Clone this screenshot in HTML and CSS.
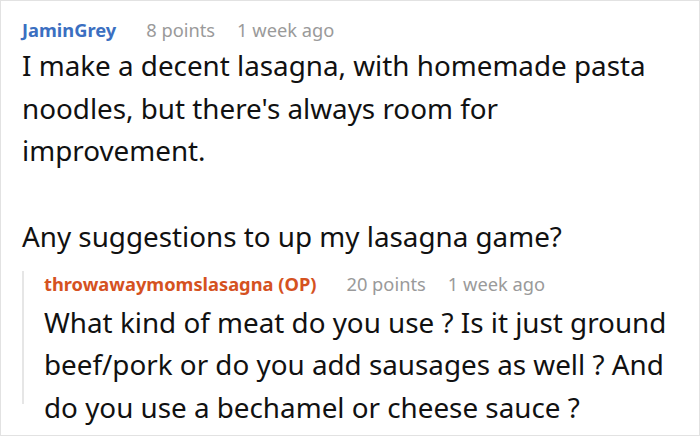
FILE: index.html
```html
<!DOCTYPE html>
<html>
<head>
<meta charset="utf-8">
<link rel="stylesheet" href="styles.css">
</head>
<body>
<div class="thread">
  <div class="comment">
    <div class="meta">
      <span class="author">JaminGrey</span>
      <span class="info">8 points</span>
      <span class="info">1 week ago</span>
    </div>
    <div class="body">
      <p>I make a decent lasagna, with homemade pasta noodles, but there's always room for improvement.</p>
      <p>Any suggestions to up my lasagna game?</p>
    </div>
    <div class="reply">
      <div class="meta">
        <span class="author op">throwawaymomslasagna (OP)</span>
        <span class="info">20 points</span>
        <span class="info">1 week ago</span>
      </div>
      <div class="body">
        <p>What kind of meat do you use ? Is it just ground beef/pork or do you add sausages as well ? And do you use a bechamel or cheese sauce ?</p>
      </div>
    </div>
  </div>
</div>
</body>
</html>
```
FILE: styles.css
```css
html, body {
  margin: 0;
  padding: 0;
  background: #fff;
}
.thread {
  width: 700px;
  height: 436px;
  box-sizing: border-box;
  border: 1px solid #e2e2e2;
  overflow: hidden;
  font-family: "Noto Sans", sans-serif;
}
.comment {
  padding: 15px 20px 0 21px;
}
.meta {
  display: flex;
  gap: 22px;
  font-size: 18.3px;
  line-height: 28px;
  white-space: nowrap;
}
.author {
  font-weight: bold;
  color: #3b6fc1;
  margin-right: 8px;
}
.author.op {
  color: #d5521f;
}
.info {
  color: #9a9a9a;
}
.body {
  font-size: 27.8px;
  line-height: 42.7px;
  color: #111;
}
.body p {
  margin: 0;
}
.body p + p {
  margin-top: 42.7px;
}
.reply {
  position: relative;
  margin-top: 12px;
  padding-left: 22px;
}
.reply::before {
  content: "";
  position: absolute;
  left: 0;
  top: 1px;
  width: 2px;
  height: 133px;
  background: #e6e6e6;
}
.reply .body {
  margin-top: 3px;
}
```
